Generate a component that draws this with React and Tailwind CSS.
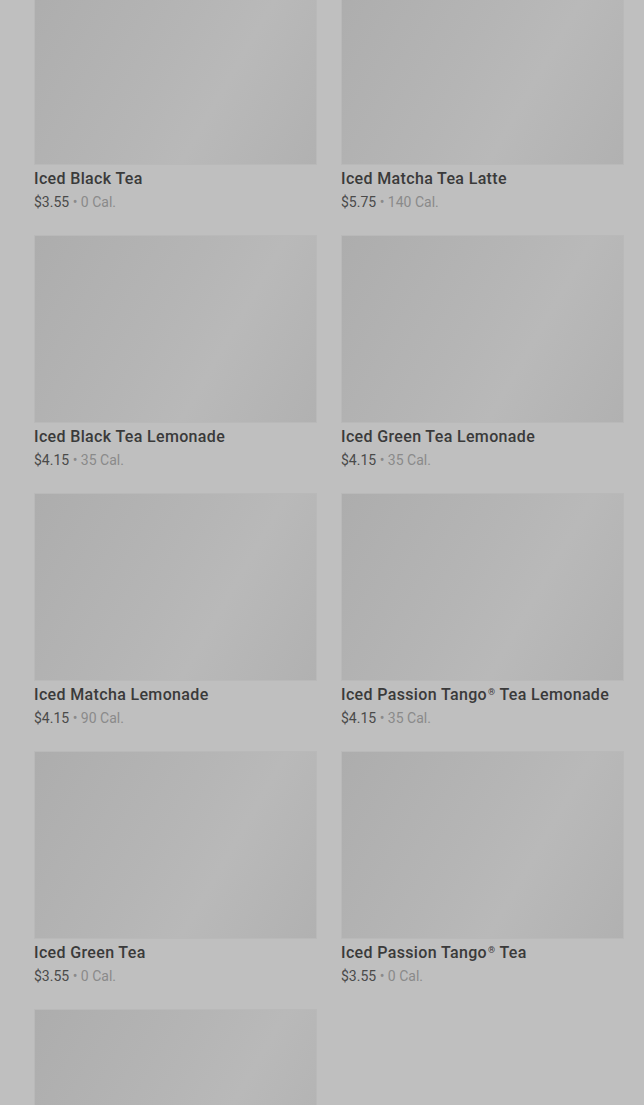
const items = [
    { name: "Iced Black Tea", price: "$3.55", cal: "0 Cal." },
    { name: "Iced Matcha Tea Latte", price: "$5.75", cal: "140 Cal." },
    { name: "Iced Black Tea Lemonade", price: "$4.15", cal: "35 Cal." },
    { name: "Iced Green Tea Lemonade", price: "$4.15", cal: "35 Cal." },
    { name: "Iced Matcha Lemonade", price: "$4.15", cal: "90 Cal." },
    { name: "Iced Passion Tango® Tea Lemonade", price: "$4.15", cal: "35 Cal." },
    { name: "Iced Green Tea", price: "$3.55", cal: "0 Cal." },
    { name: "Iced Passion Tango® Tea", price: "$3.55", cal: "0 Cal." },
    { name: "", price: "", cal: "" },
]

// small raised ® like the menu font
const Name = ({ text }) => {
    const parts = text.split("®")
    return parts.map((p, i) => (
        <span key={i}>
            {p}
            {i < parts.length - 1 ? <sup className="text-[9px] top-[-0.6em] ml-px">®</sup> : ""}
        </span>
    ))
}

const ProductCard = ({ item }) => {
    return (
        <div className="flex flex-col">
            <div className="h-[188px] w-full bg-[linear-gradient(120deg,#adadad_0%,#b5b5b5_45%,#b9b9b9_65%,#b1b1b1_100%)] border border-[#b9b9b9]" />
            {item.name ? (
                <>
                    <h2 className="mt-[2px] text-[16px] leading-6 font-medium text-[#3a3a3a] tracking-[0.35px]"><Name text={item.name} /></h2>
                    <p className="mt-px text-[14px] leading-5 text-[#4a4a4a]">
                        {item.price}
                        <span className="text-[#8a8a8a]"> • {item.cal}</span>
                    </p>
                </>
            ) : ""}
        </div>
    )
}

const App = () => {
    return (
        <div className="h-[1105px] overflow-hidden bg-[#bfbfbf] font-['Roboto','Inter',sans-serif]">
            <div className="-mt-[23px] pl-[34px] pr-[20px] grid grid-cols-2 gap-x-6 gap-y-[23px]">
                {items.map((item, i) => <ProductCard key={i} item={item} />)}
            </div>
        </div>
    )
}

export default App;
